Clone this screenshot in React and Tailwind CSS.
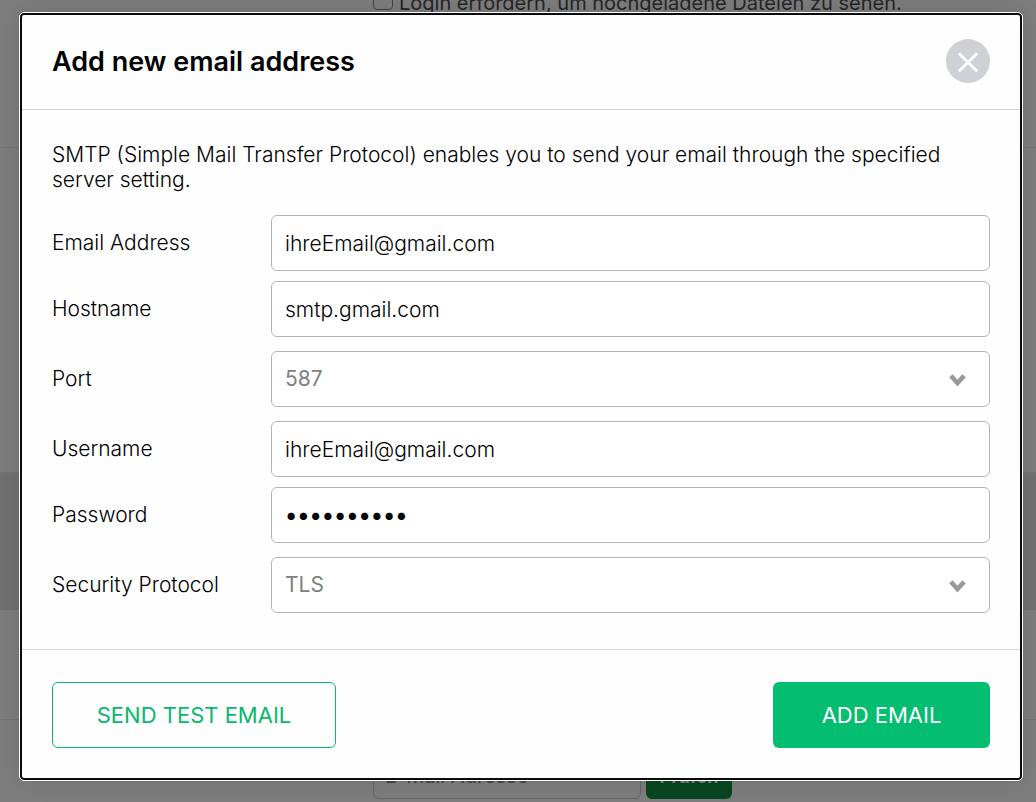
import { useState } from "react";

const rows = [
  { id: "email", label: "Email Address", type: "email", value: "ihreEmail@gmail.com", gap: "mb-2.5" },
  { id: "host", label: "Hostname", type: "text", value: "smtp.gmail.com", gap: "mb-3.5" },
  { id: "port", label: "Port", options: ["587", "465", "25"], gap: "mb-3.5" },
  { id: "user", label: "Username", type: "text", value: "ihreEmail@gmail.com", gap: "mb-2.5" },
  { id: "password", label: "Password", type: "password", value: "smtp-login", gap: "mb-3.5" },
  { id: "security", label: "Security Protocol", options: ["TLS", "SSL"], gap: "" },
];

const control =
  "h-14 w-full rounded-md border border-[#b5b5b5] bg-white px-[13px] outline-none";

function Field({ row }) {
  const [value, setValue] = useState(row.options ? row.options[0] : row.value);
  const onChange = (e) => setValue(e.target.value);
  return (
    <div className={"flex items-center " + row.gap}>
      <label htmlFor={row.id} className="w-[219px] shrink-0">
        {row.label}
      </label>
      <div className="relative grow">
        {row.options ? (
          <>
            <select
              id={row.id}
              value={value}
              onChange={onChange}
              className={control + " appearance-none font-normal text-[#808080]"}
            >
              {row.options.map((o) => (
                <option key={o}>{o}</option>
              ))}
            </select>
            <svg
              viewBox="0 0 18 14"
              className="pointer-events-none absolute right-[23px] top-[22px] h-3.5 w-[18px]"
              aria-hidden="true"
            >
              <path d="M1.9 2.7 8.5 10 15.1 2.7" fill="none" stroke="#999" strokeWidth="4.6" />
            </svg>
          </>
        ) : (
          <input
            id={row.id}
            type={row.type}
            value={value}
            onChange={onChange}
            className={row.type === "password" ? control + " text-[23px] font-medium" : control}
          />
        )}
      </div>
    </div>
  );
}

function Backdrop() {
  return (
    <div className="flex h-screen flex-col overflow-hidden bg-[#7d7d7d] text-xl text-[#262626]">
      <div className="h-[148px] shrink-0 border-b border-[#737373]">
        <label className="-mt-2.5 ml-[373px] flex items-start gap-1.5 leading-[26px]">
          <input
            type="checkbox"
            className="size-5 appearance-none rounded border border-[#444]"
          />
          Login erfordern, um hochgeladene Dateien zu sehen.
        </label>
      </div>
      <div className="h-[325px] shrink-0 border-b border-[#737373]" />
      <div className="h-[137px] shrink-0 bg-[#707070]" />
      <div className="h-[110px] shrink-0 border-b border-[#737373]" />
      <div className="ml-[373px] mt-[23px] flex shrink-0 gap-[5px]">
        <input
          aria-label="E-Mail Adresse"
          placeholder="E-Mail Adresse"
          className="h-14 w-[268px] rounded-md border border-[#666] px-[11px] pt-2.5 placeholder:text-[#404040]"
        />
        <button className="h-14 w-[86px] rounded-md bg-[#08461f] pt-3 text-lg font-bold text-[#808080]">
          Prüfen
        </button>
      </div>
    </div>
  );
}

export default function App() {
  return (
    <div className="relative font-['Inter',sans-serif]">
      <Backdrop />
      <div className="absolute inset-0 pb-5 pl-5 pr-3.5 pt-[13px]">
        <section
          role="dialog"
          aria-labelledby="dialog-title"
          className="rounded border-2 border-[#0c0c0c] bg-[#fefefe] text-[21px] font-light text-black shadow-[0_0_24px_rgba(0,0,0,0.12)] outline outline-1 outline-white"
        >
          <header className="flex h-[95px] items-center justify-between border-b border-[#d3d5d6] px-[30px] pb-0.5">
            <h1 id="dialog-title" className="pt-0.5 text-[27px] font-semibold">
              Add new email address
            </h1>
            <button
              aria-label="Close"
              className="flex size-11 items-center justify-center rounded-full bg-[#d0d1d7]"
            >
              <svg viewBox="0 0 44 44" className="size-11" aria-hidden="true">
                <path d="M12.8 14.5 31.2 32.2M31.2 14.5 12.8 32.2" stroke="white" strokeWidth="2.8" />
              </svg>
            </button>
          </header>
          <form className="px-[30px] pb-9 pt-8" onSubmit={(e) => e.preventDefault()}>
            <p className="mb-[23px] leading-[25px]">
              SMTP (Simple Mail Transfer Protocol) enables you to send your email through the specified
              server setting.
            </p>
            {rows.map((row) => (
              <Field key={row.id} row={row} />
            ))}
          </form>
          <footer className="flex justify-between border-t border-[#d3d5d6] px-[30px] pb-[30px] pt-8 text-[22px] font-normal">
            <button className="h-[66px] w-[284px] rounded-md border border-[#07b96d] text-[#07b96d]">
              SEND TEST EMAIL
            </button>
            <button className="h-[66px] w-[217px] rounded-md bg-[#03bd70] text-white">
              ADD EMAIL
            </button>
          </footer>
        </section>
      </div>
    </div>
  );
}
